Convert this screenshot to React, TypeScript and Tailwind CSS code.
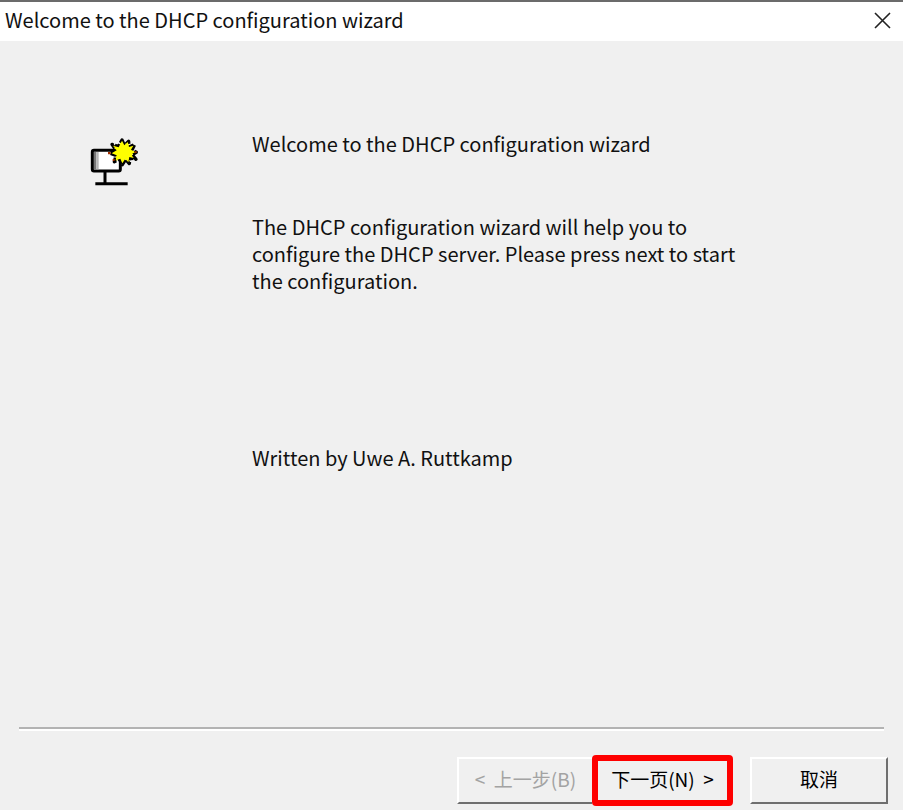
import React from 'react';
import clsx from 'clsx';

function WizardIcon() {
  return (
    <svg width="70" height="65" viewBox="0 0 210 195" aria-hidden="true">
      {/* monitor */}
      <rect x="37" y="61" width="84" height="62" rx="5" fill="#fff" stroke="#000" strokeWidth="9" />
      <rect x="42" y="66" width="7" height="52" fill="#777" />
      <rect x="49" y="66" width="7" height="52" fill="#b5b5b5" />
      <path d="M75 124V161M46 161H143" stroke="#000" strokeWidth="9" fill="none" />
      {/* spark */}
      <path
        d="M126 30L133 46L146 34L147 51L164 44L156 60L169 67L156 74L168 88L150 83L148 101L137 88L127 104L120 87L103 95L108 76L90 70L108 61L96 43L115 50Z"
        fill="#ff0"
        stroke="#000"
        strokeWidth="10"
        strokeLinejoin="round"
        strokeDasharray="19 5"
      />
      <path
        d="M126 32L133 46L143 36L147 51L160 47L153 59L165 67L153 73L161 84L148 81L145 97L136 86L127 100L121 86L107 91L110 76L95 70L110 61L99 47L116 52Z"
        fill="#ff0"
      />
      <path d="M84 66H92V73H84ZM98 87H104V93H98ZM164 64H170V69H164Z" fill="#a33000" />
    </svg>
  );
}

interface WizardButtonProps {
  label: string;
  disabled?: boolean;
  className?: string;
}

function WizardButton({ label, disabled, className }: WizardButtonProps) {
  return (
    <button
      type="button"
      disabled={disabled}
      className={clsx(
        'pb-1 text-center text-[19px] whitespace-pre',
        disabled ? 'text-[#a3a3a3]' : 'text-black',
        className
      )}
    >
      {label}
    </button>
  );
}

export default function App() {
  return (
    <div className="flex min-h-screen flex-col bg-[#f0f0f0] font-['Noto_Sans_CJK_SC',sans-serif] text-[20px] leading-[27px] text-[#111]">
      <header className="flex h-[41px] items-center justify-between border-t-2 border-[#6b6b6b] bg-white pr-3 pb-1 pl-[5px]">
        <h1>Welcome to the DHCP configuration wizard</h1>
        <button type="button" aria-label="Close">
          <svg width="18" height="18" viewBox="0 0 18 18" fill="none" stroke="#222" strokeWidth="1.6">
            <path d="M2 2L17 17M17 2L2 17" />
          </svg>
        </button>
      </header>

      <main className="flex flex-1 items-start gap-[102px] pt-[89px] pl-20">
        <WizardIcon />
        <div className="w-[500px]">
          <h2>Welcome to the DHCP configuration wizard</h2>
          <p className="mt-14">
            The DHCP configuration wizard will help you to configure the DHCP server. Please press
            next to start the configuration.
          </p>
          <p className="mt-[150px]">Written by Uwe A. Ruttkamp</p>
        </div>
      </main>

      <footer className="pr-[15px] pb-1.5 pl-[19px]">
        <hr className="mr-1 h-1 border-t-2 border-b-2 border-t-[#b3b3b3] border-b-white" />
        <div className="mt-[26px] flex items-center justify-end">
          <WizardButton
            label="<  上一步(B)"
            disabled
            className="h-[47px] w-[135px] border-t-2 border-b-2 border-l-2 border-t-white border-b-[#6f6f6f] border-l-white"
          />
          <WizardButton
            label="下一页(N)  >"
            className="-my-0.5 h-[51px] w-[141px] rounded-[4px] border-6 border-[#fe0000]"
          />
          <WizardButton
            label="取消"
            className="ml-[17px] h-[47px] w-[138px] border-2 border-t-white border-r-[#6f6f6f] border-b-[#6f6f6f] border-l-white"
          />
        </div>
      </footer>
    </div>
  );
}
